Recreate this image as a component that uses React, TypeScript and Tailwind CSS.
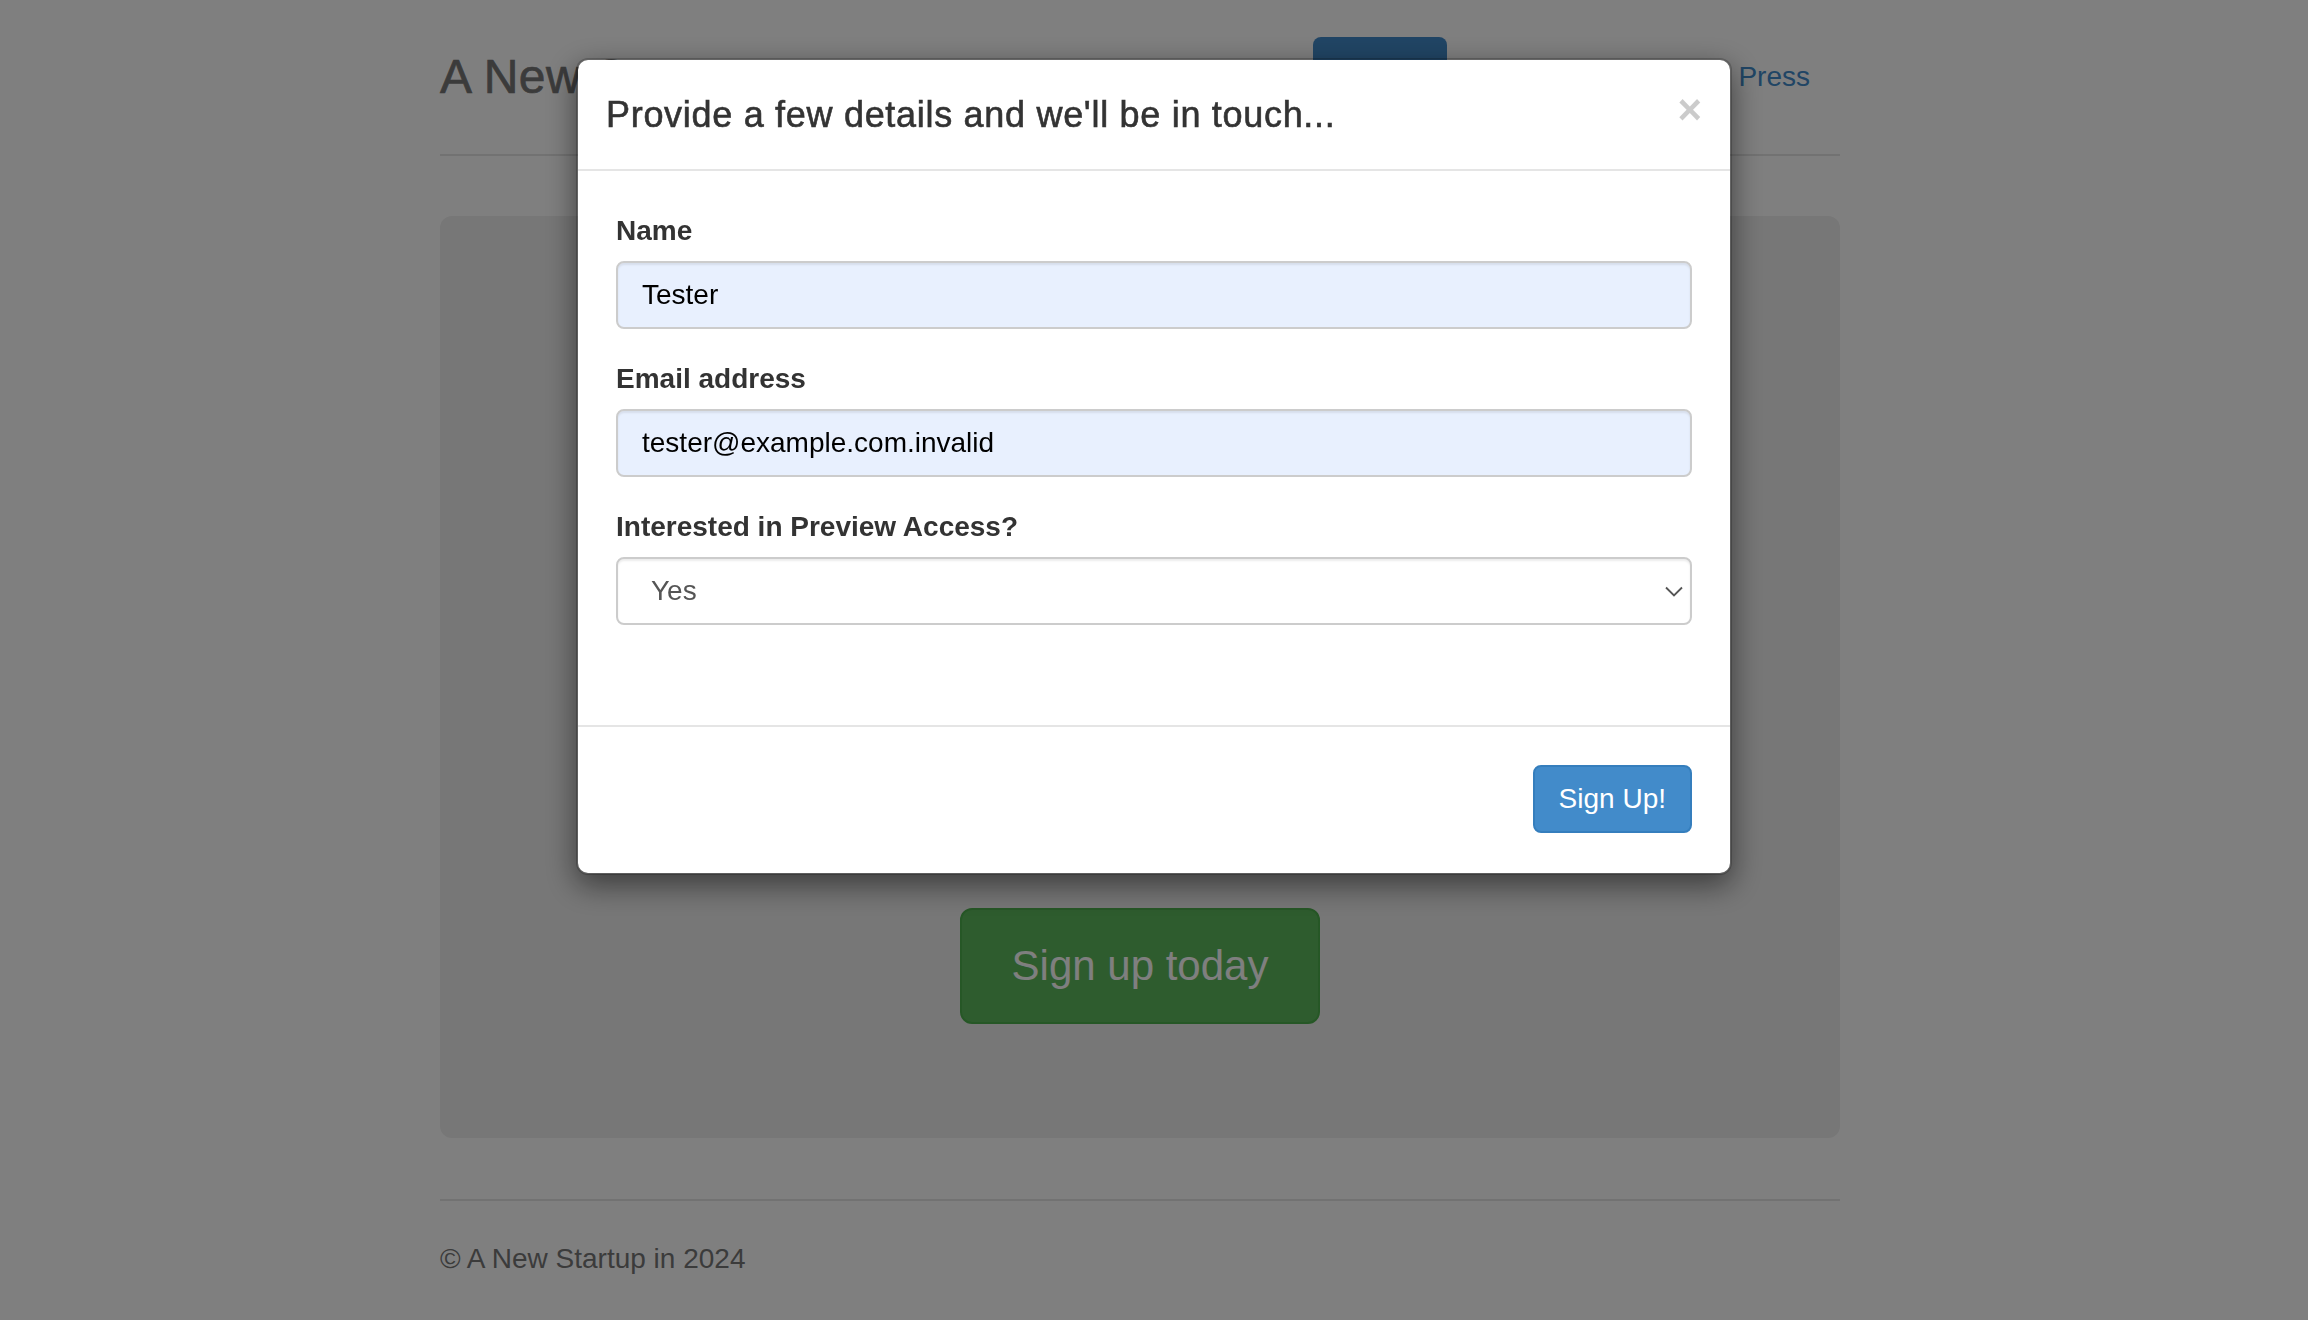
import React from "react";

export default function App() {
  return (
    <div className="relative min-h-screen bg-white font-['Liberation_Sans',Arial,sans-serif] text-[#333333]">
      {/* Page */}
      <div className="ml-[440px] w-[1400px]">
        <header className="flex items-start justify-between border-b-2 border-[#e5e5e5] pt-[37px] pb-[37px]">
          <h3 className="mt-[12px] text-[48px] leading-[56px] tracking-[0.5px] text-[#777777] [-webkit-text-stroke:0.7px_#777777]">
            A New Startup
          </h3>
          <ul className="flex gap-[4px] text-[28px] leading-[40px]">
            <li className="rounded-[8px] bg-[#428bca] px-[30px] py-[20px] text-white">Home</li>
            <li className="rounded-[8px] px-[30px] py-[20px] text-[#428bca]">About</li>
            <li className="rounded-[8px] px-[30px] py-[20px] text-[#428bca]">Blog</li>
            <li className="rounded-[8px] px-[30px] py-[20px] text-[#428bca]">Press</li>
          </ul>
        </header>

        <section className="mt-[60px] flex h-[922px] flex-col items-center rounded-[12px] bg-[#eeeeee] pt-[692px] text-center">
          <button className="h-[116px] rounded-[12px] border-2 border-[#4cae4c] bg-[#5cb85c] px-[50px] text-[42px] leading-[56px] text-white">
            Sign up today
          </button>
        </section>

        <footer className="mt-[61px] border-t-2 border-[#e5e5e5] pt-[38px] text-[28px] leading-[40px] text-[#777777]">
          © A New Startup in 2024
        </footer>
      </div>

      {/* Backdrop */}
      <div className="fixed inset-0 z-10 bg-black/50" />

      {/* Modal */}
      <div className="fixed inset-0 z-20 flex justify-center pt-[58px]">
        <div className="h-fit w-[1156px] rounded-[12px] border-2 border-black/20 bg-white bg-clip-padding shadow-[0_10px_30px_rgba(0,0,0,0.5)]">
          <div className="flex items-start justify-between border-b-2 border-[#e5e5e5] px-[28px] pt-[28px] pb-[28px]">
            <h4 className="text-[36px] leading-[53px] tracking-[0.7px] text-[#333333] [-webkit-text-stroke:0.6px_#333333]">
              Provide a few details and we'll be in touch...
            </h4>
            <button className="mt-[1px] text-[42px] leading-[42px] font-bold text-black opacity-20 [text-shadow:0_2px_0_#fff]">
              ×
            </button>
          </div>

          <div className="px-[38px] pt-[40px] pb-[40px]">
            <div className="mb-[30px]">
              <label className="mb-[10px] block text-[28px] leading-[40px] font-bold text-[#333333]">Name</label>
              <div className="flex h-[68px] items-center rounded-[8px] border-2 border-[#cccccc] bg-[#e8f0fe] px-[24px] text-[28px] text-black shadow-[inset_0_2px_2px_rgba(0,0,0,0.075)]">
                Tester
              </div>
            </div>
            <div className="mb-[30px]">
              <label className="mb-[10px] block text-[28px] leading-[40px] font-bold text-[#333333]">Email address</label>
              <div className="flex h-[68px] items-center rounded-[8px] border-2 border-[#cccccc] bg-[#e8f0fe] px-[24px] text-[28px] text-black shadow-[inset_0_2px_2px_rgba(0,0,0,0.075)]">
                tester@example.com.invalid
              </div>
            </div>
            <div className="mb-[30px]">
              <label className="mb-[10px] block text-[28px] leading-[40px] font-bold text-[#333333]">
                Interested in Preview Access?
              </label>
              <div className="flex h-[68px] items-center justify-between rounded-[8px] border-2 border-[#cccccc] bg-white pl-[33px] pr-[7px] text-[28px] text-[#555555] shadow-[inset_0_2px_2px_rgba(0,0,0,0.075)]">
                <span>Yes</span>
                <svg width="18" height="11" viewBox="0 0 18 11" fill="none">
                  <path d="M1 1.5 L9 9.5 L17 1.5" stroke="#555555" strokeWidth="1.8" />
                </svg>
              </div>
            </div>
          </div>

          <div className="mt-[30px] flex justify-end border-t-2 border-[#e5e5e5] px-[38px] pt-[38px] pb-[40px]">
            <button className="h-[68px] rounded-[8px] border-2 border-[#357ebd] bg-[#428bca] px-[24px] text-[28px] leading-[40px] text-white">
              Sign Up!
            </button>
          </div>
        </div>
      </div>
    </div>
  );
}
